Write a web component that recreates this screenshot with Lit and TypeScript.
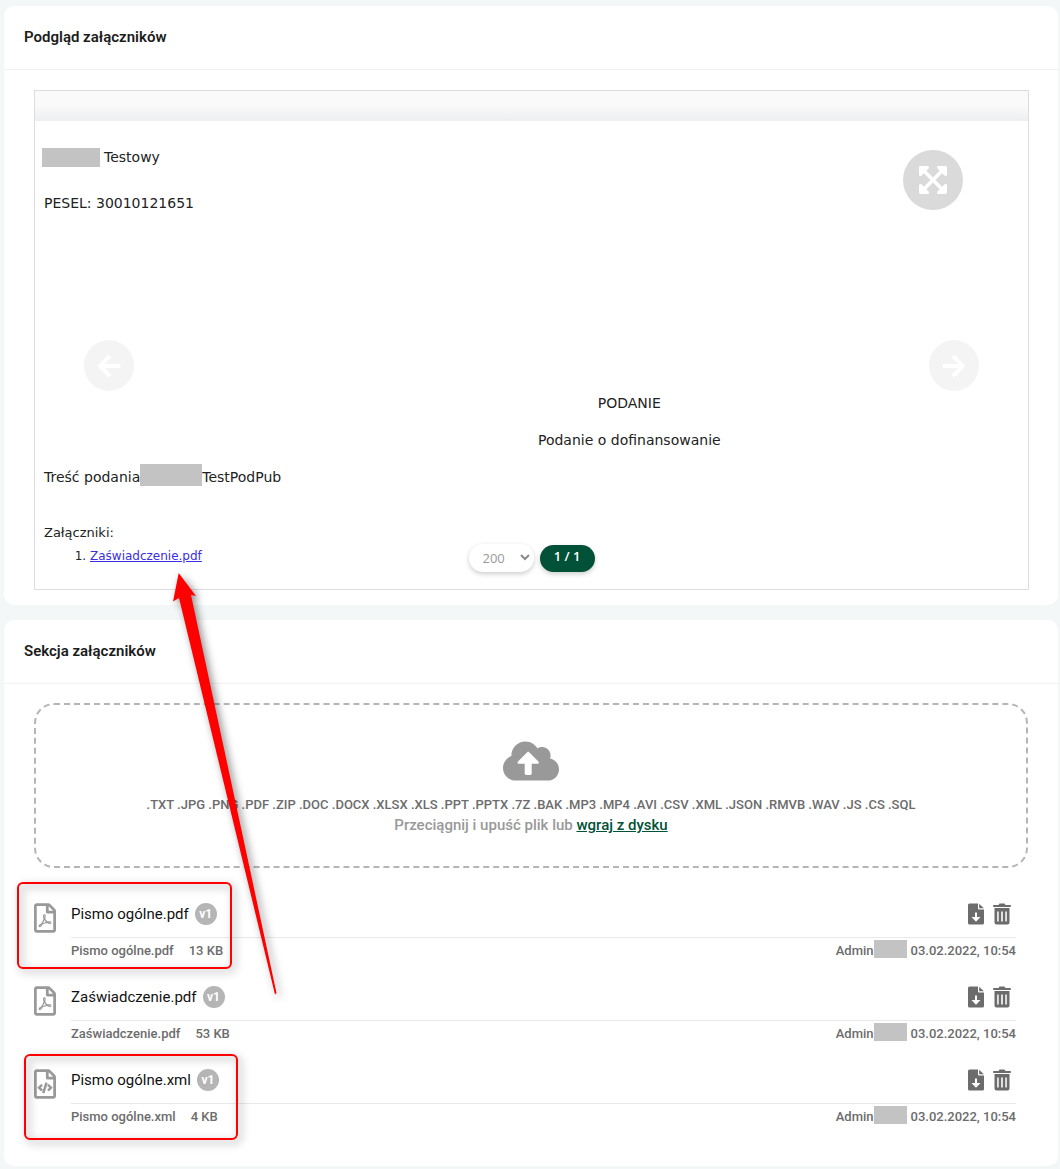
import { LitElement, html, svg, css } from "lit";
import { customElement, property } from "lit/decorators.js";

interface Attachment {
  name: string;
  size: string;
  kind: "pdf" | "xml";
  author: string;
  date: string;
}

const ATTACHMENTS: Attachment[] = [
  { name: "Pismo ogólne.pdf", size: "13 KB", kind: "pdf", author: "Admin", date: "03.02.2022, 10:54" },
  { name: "Zaświadczenie.pdf", size: "53 KB", kind: "pdf", author: "Admin", date: "03.02.2022, 10:54" },
  { name: "Pismo ogólne.xml", size: "4 KB", kind: "xml", author: "Admin", date: "03.02.2022, 10:54" },
];

const EXTENSIONS =
  ".TXT .JPG .PNG .PDF .ZIP .DOC .DOCX .XLSX .XLS .PPT .PPTX .7Z .BAK .MP3 .MP4 .AVI .CSV .XML .JSON .RMVB .WAV .JS .CS .SQL";

const FILE_OUTLINE =
  "M369.9 97.9L286 14C277 5 264.8-.1 252.1-.1H48C21.5 0 0 21.5 0 48v416c0 26.5 21.5 48 48 48h288c26.5 0 48-21.5 48-48V131.9c0-12.7-5.1-25-14.1-34zM332.1 128H256V51.9l76.1 76.1zM48 464V48h160v104c0 13.3 10.7 24 24 24h104v288H48z";

const PDF_MARK =
  "M298.2 320.3c-12.2-12-47-8.7-64.4-6.5-17.2-10.5-28.7-25-36.8-46.3 3.9-16.1 10.1-40.6 5.4-56-4.2-26.2-37.8-23.6-42.6-5.9-4.4 16.1-.4 38.5 7 67.1-10 23.9-24.9 56-35.4 74.4-20 10.3-47 26.2-51 46.2-3.3 15.8 26 55.2 76.1-31.2 22.4-7.4 46.8-16.5 68.4-20.1 18.9 10.2 41 17 55.8 17 25.5 0 28-28.2 17.5-38.7zm-198.1 77.8c5.1-13.7 24.5-29.5 30.4-35-19 30.3-30.4 35.7-30.4 35zm81.6-190.6c7.4 0 6.7 32.1 1.8 40.8-4.4-13.9-4.3-40.8-1.8-40.8zm-24.4 136.6c9.7-16.9 18-37 24.7-54.7 8.3 15.1 18.9 27.2 30.1 35.5-20.8 4.3-38.9 13.1-54.8 19.2zm131.6-5s-5 6-37.3-7.8c35.1-2.6 40.9 5.4 37.3 7.8z";

const CODE_BRACKET =
  "M149.9 349.1l-.2-.2-32.8-28.9 32.8-28.9c3.6-3.2 4-8.8.8-12.4l-.2-.2-17.4-18.6c-3.4-3.6-9-3.7-12.4-.4l-57.7 54.1c-3.7 3.5-3.7 9.4 0 12.8l57.7 54.1c1.6 1.5 3.8 2.4 6 2.4 2.4 0 4.8-1 6.4-2.8l17.4-18.6c3.3-3.5 3.1-9.1-.4-12.4z";

const ARROW_RIGHT =
  "M190.5 66.9l22.2-22.2c9.4-9.4 24.6-9.4 33.9 0L441 239c9.4 9.4 9.4 24.6 0 33.9L246.6 467.3c-9.4 9.4-24.6 9.4-33.9 0l-22.2-22.2c-9.5-9.5-9.3-25 .4-34.3L311.4 296H24c-13.3 0-24-10.7-24-24v-32c0-13.3 10.7-24 24-24h287.4L190.9 101.2c-9.8-9.3-10-24.8-.4-34.3z";

const EXPAND =
  "M448 344v112a23.94 23.94 0 0 1-24 24H312c-21.39 0-32.09-25.9-17-41l36.2-36.2L224 295.6 116.77 402.9 153 439c15.09 15.1 4.39 41-17 41H24a23.94 23.94 0 0 1-24-24V344c0-21.4 25.89-32.1 41-17l36.19 36.2L184.46 256 77.18 148.7 41 185c-15.1 15.1-41 4.4-41-17V56a23.94 23.94 0 0 1 24-24h112c21.39 0 32.09 25.9 17 41l-36.2 36.2L224 216.4l107.23-107.3L295 73c-15.09-15.1-4.39-41 17-41h112a23.94 23.94 0 0 1 24 24v112c0 21.4-25.89 32.1-41 17l-36.19-36.2L263.54 256l107.28 107.3L407 327.1c15.1-15.2 41-4.5 41 16.9z";

const CLOUD_UPLOAD =
  "M537.6 226.6c4.1-10.7 6.4-22.4 6.4-34.6 0-53-43-96-96-96-19.7 0-38.1 6-53.3 16.2C367 64.2 315.3 32 256 32c-88.4 0-160 71.6-160 160 0 2.7.1 5.4.2 8.1C40.2 219.8 0 273.2 0 336c0 79.5 64.5 144 144 144h368c70.7 0 128-57.3 128-128 0-61.9-44-113.6-102.4-125.4zM393.4 288H328v112c0 8.8-7.2 16-16 16h-48c-8.8 0-16-7.2-16-16V288h-65.4c-14.3 0-21.4-17.2-11.3-27.4l105.4-105.4c6.2-6.2 16.4-6.2 22.6 0l105.4 105.4c10.1 10.1 2.9 27.4-11.3 27.4z";

const codeMark = svg`
  <path d=${CODE_BRACKET}></path>
  <path d=${CODE_BRACKET} transform="translate(384 0) scale(-1 1)"></path>
  <path d="M206 228l25 7c5 1 7 6 6 11l-52 167c-1 5-6 7-11 6l-25-7c-5-1-7-6-6-11l52-167c1-5 6-7 11-6z"></path>`;

@customElement("attachment-row")
export class AttachmentRow extends LitElement {
  @property({ attribute: false }) file!: Attachment;

  static styles = css`
    :host {
      display: grid;
      grid-template-columns: 22px 1fr;
      column-gap: 15px;
      color: #6c6c6c;
    }
    .kind {
      width: 22px;
      height: 30px;
      margin-top: 8px;
      fill: #999;
    }
    .main {
      display: flex;
      align-items: center;
      height: 43px;
      padding-bottom: 4px;
      border-bottom: 1px solid #e9e9e9;
      box-sizing: border-box;
    }
    .name {
      font-size: 15px;
      line-height: 20px;
      color: #111;
      margin-right: 6px;
    }
    .version {
      display: grid;
      place-items: center;
      width: 22px;
      height: 22px;
      border-radius: 50%;
      background: #b5b5b5;
      color: #fff;
      font-size: 12px;
      font-weight: 700;
    }
    .actions {
      display: flex;
      gap: 8px;
      margin-left: auto;
      padding-right: 5px;
    }
    .action {
      padding: 0;
      border: 0;
      background: none;
      cursor: pointer;
      height: 22px;
    }
    .action svg {
      display: block;
      height: 22px;
      fill: #6c6c6c;
    }
    .meta {
      display: flex;
      align-items: center;
      height: 26px;
      font-size: 13px;
      font-weight: 500;
      line-height: 20px;
    }
    .size {
      margin-left: 15px;
    }
    .author {
      margin-left: auto;
    }
    .masked {
      width: 33px;
      height: 18px;
      margin: 0 4px 4px 0;
      background: #c3c3c3;
    }
  `;

  render() {
    const { name, size, kind, author, date } = this.file;
    return html`
      <svg class="kind" viewBox="0 0 384 512" aria-hidden="true">
        <path d=${FILE_OUTLINE}></path>
        ${kind === "pdf" ? svg`<path d=${PDF_MARK}></path>` : codeMark}
      </svg>
      <div>
        <div class="main">
          <span class="name">${name}</span>
          <span class="version">v1</span>
          <div class="actions">
            <button class="action" type="button" aria-label="Pobierz">
              <svg width="18" viewBox="0 0 18 22" aria-hidden="true">
                <path fill-rule="evenodd" d="M2.500.5H11V5.500a1 1 0 0 0 1 1H17V20a1.500 1.500 0 0 1-1.500 1.500H2.500A1.500 1.500 0 0 1 1 20V2A1.500 1.500 0 0 1 2.500.5ZM8 9.500V14H4.500L9 18.800 13.500 14H10V9.500Z"></path>
                <path d="M12.200.7L16.800 5.300H12.200Z"></path>
              </svg>
            </button>
            <button class="action" type="button" aria-label="Usuń">
              <svg width="18" viewBox="0 0 18 22" aria-hidden="true">
                <path d="M5.500 2L6.500.500H11.500L12.500 2H17.800V4H.200V2Z"></path>
                <path fill-rule="evenodd" d="M1.500 5H16.500V19.500a2 2 0 0 1-2 2h-11a2 2 0 0 1-2-2ZM4.200 8.500V18.500H5.700V8.500ZM8.200 8.500V18.500H9.800V8.500ZM12.300 8.500V18.500H13.800V8.500Z"></path>
              </svg>
            </button>
          </div>
        </div>
        <div class="meta">
          <span>${name}</span>
          <span class="size">${size}</span>
          <span class="author">${author}</span>
          <span class="masked"></span>
          <span>${date}</span>
        </div>
      </div>
    `;
  }
}

@customElement("app-root")
export class AppRoot extends LitElement {
  static styles = css`
    :host {
      display: block;
      position: relative;
      box-sizing: border-box;
      min-height: 100vh;
      padding: 6px 2px 3px 4px;
      background: #f4f7f7;
      font-family: Roboto, "Liberation Sans", sans-serif;
      color: #1c1c1c;
    }
    .cards {
      display: grid;
      gap: 15px;
    }
    .card {
      background: #fff;
      border-radius: 10px;
    }
    .title {
      margin: 0;
      padding: 21px 20px 22px;
      border-bottom: 1px solid #f2f2f2;
      font-size: 15px;
      font-weight: 600;
      line-height: 20px;
    }
    .preview {
      padding: 20px 29px 15px 30px;
    }
    .section {
      padding: 19px 30px 15px;
    }
    .viewer {
      position: relative;
      overflow: hidden;
      border: 1px solid #dcdde2;
      font-family: "DejaVu Sans", Verdana, sans-serif;
      font-size: 14px;
      line-height: 20px;
      color: #222;
    }
    .band {
      height: 30px;
      background: linear-gradient(#fafafa 50%, #eceef0);
    }
    .page {
      box-sizing: border-box;
      width: 120%;
      padding: 26px 12px 23px 9px;
    }
    .line {
      margin: 0;
    }
    .person {
      display: flex;
      align-items: center;
      gap: 4px;
      margin-left: -2px;
    }
    .mask-name {
      width: 58px;
      height: 19px;
      background: #c3c3c3;
    }
    .mask-text {
      width: 62px;
      height: 22px;
      margin: -4px 0 0;
      background: #c3c3c3;
    }
    .pesel {
      margin-top: 26px;
    }
    .heading {
      margin-top: 180px;
      text-align: center;
    }
    .subject {
      margin-top: 17px;
      text-align: center;
    }
    .content {
      display: flex;
      align-items: center;
      height: 20px;
      margin-top: 17px;
    }
    .enclosures {
      margin-top: 36px;
      font-size: 13px;
    }
    .enclosure-list {
      margin: 3px 0 0;
      padding-left: 46px;
      font-size: 12px;
    }
    .enclosure-list a {
      color: #3a2ee0;
    }
    .round {
      position: absolute;
      display: grid;
      place-items: center;
      padding: 0;
      border: 0;
      border-radius: 50%;
      cursor: pointer;
    }
    .round svg {
      fill: #fff;
    }
    .expand {
      top: 59px;
      right: 65px;
      width: 60px;
      height: 60px;
      background: #dadada;
    }
    .step {
      top: 50%;
      width: 50px;
      height: 51px;
      background: #f4f4f4;
    }
    .prev {
      left: 49px;
    }
    .prev svg {
      transform: scaleX(-1);
    }
    .next {
      right: 49px;
    }
    .pager {
      position: absolute;
      left: 0;
      right: 0;
      bottom: 17px;
      display: flex;
      justify-content: center;
      align-items: flex-end;
      gap: 6px;
      font-family: "Open Sans", "Noto Sans", sans-serif;
    }
    .zoom {
      display: grid;
      align-items: center;
      height: 28px;
      border-radius: 14px;
      background: #fff;
      box-shadow: 0 2px 5px rgba(0, 0, 0, 0.2);
    }
    .zoom select,
    .zoom svg {
      grid-area: 1 / 1;
    }
    .zoom select {
      appearance: none;
      width: 65px;
      height: 28px;
      padding: 0 0 0 14px;
      border: 0;
      border-radius: 14px;
      background: none;
      font: inherit;
      font-size: 13px;
      color: #999;
    }
    .zoom svg {
      justify-self: end;
      margin-right: 4px;
      pointer-events: none;
    }
    .count {
      box-sizing: border-box;
      width: 55px;
      height: 27px;
      border-radius: 14px;
      background: #005137;
      box-shadow: 0 2px 5px rgba(0, 0, 0, 0.2);
      color: #fff;
      font-size: 13px;
      font-weight: 600;
      line-height: 22px;
      text-align: center;
    }
    .drop {
      display: flex;
      flex-direction: column;
      align-items: center;
      padding: 35px 20px 31px;
      border: 2px dashed #b5b5b5;
      border-radius: 20px;
      font-weight: 500;
      line-height: 20px;
      text-align: center;
    }
    .cloud {
      width: 56px;
      height: 42px;
      margin-bottom: 13px;
      fill: #999;
    }
    .formats {
      font-size: 13px;
      color: #6c6c6c;
    }
    .hint {
      font-size: 15px;
      color: #999;
    }
    .hint a {
      color: #005137;
    }
    .files {
      display: grid;
      gap: 14px;
      margin: 0;
      padding: 27px 12px 21px 0;
      list-style: none;
    }
    .marks {
      position: absolute;
      top: 0;
      left: 0;
      width: 300px;
      height: 1169px;
      pointer-events: none;
      filter: drop-shadow(3px 3px 4px rgba(0, 0, 0, 0.45));
    }
  `;

  render() {
    return html`
      <main class="cards">
        <section class="card">
          <h2 class="title">Podgląd załączników</h2>
          <div class="preview">
            <div class="viewer">
              <div class="band"></div>
              <div class="page">
                <p class="line person"><span class="mask-name"></span>Testowy</p>
                <p class="line pesel">PESEL: 30010121651</p>
                <p class="line heading">PODANIE</p>
                <p class="line subject">Podanie o dofinansowanie</p>
                <p class="line content">Treść podania<span class="mask-text"></span>TestPodPub</p>
                <p class="line enclosures">Załączniki:</p>
                <ol class="enclosure-list">
                  <li><a href="#zaswiadczenie">Zaświadczenie.pdf</a></li>
                </ol>
              </div>
              <button class="round expand" type="button" aria-label="Pełny ekran">
                <svg width="28" height="32" viewBox="0 0 448 512"><path d=${EXPAND}></path></svg>
              </button>
              <button class="round step prev" type="button" aria-label="Poprzedni">
                <svg width="24" height="26" viewBox="0 0 448 512"><path d=${ARROW_RIGHT}></path></svg>
              </button>
              <button class="round step next" type="button" aria-label="Następny">
                <svg width="24" height="26" viewBox="0 0 448 512"><path d=${ARROW_RIGHT}></path></svg>
              </button>
              <div class="pager">
                <div class="zoom">
                  <select aria-label="Powiększenie">
                    <option>200</option>
                  </select>
                  <svg width="10" height="8" viewBox="0 0 10 8" aria-hidden="true">
                    <path d="M1 1l4 4 4-4" fill="none" stroke="#8a8a8a" stroke-width="2"></path>
                  </svg>
                </div>
                <span class="count">1 / 1</span>
              </div>
            </div>
          </div>
        </section>
        <section class="card">
          <h2 class="title">Sekcja załączników</h2>
          <div class="section">
            <div class="drop">
              <svg class="cloud" viewBox="0 16 640 480" aria-hidden="true"><path d=${CLOUD_UPLOAD}></path></svg>
              <div class="formats">${EXTENSIONS}</div>
              <div class="hint">Przeciągnij i upuść plik lub <a href="#dysk">wgraj z dysku</a></div>
            </div>
            <ul class="files">
              ${ATTACHMENTS.map((file) => html`<li><attachment-row .file=${file}></attachment-row></li>`)}
            </ul>
          </div>
        </section>
      </main>
      <svg class="marks" viewBox="0 0 300 1169" aria-hidden="true">
        <path fill="#f00" d="M178.700 573L196 596 191 595 276.500 993 275 994.500 179 598 173 601.500Z"></path>
        <rect x="18" y="883" width="213" height="85" rx="5" fill="none" stroke="#f00" stroke-width="2"></rect>
        <rect x="25" y="1055" width="212" height="84" rx="5" fill="none" stroke="#f00" stroke-width="2"></rect>
      </svg>
    `;
  }
}
